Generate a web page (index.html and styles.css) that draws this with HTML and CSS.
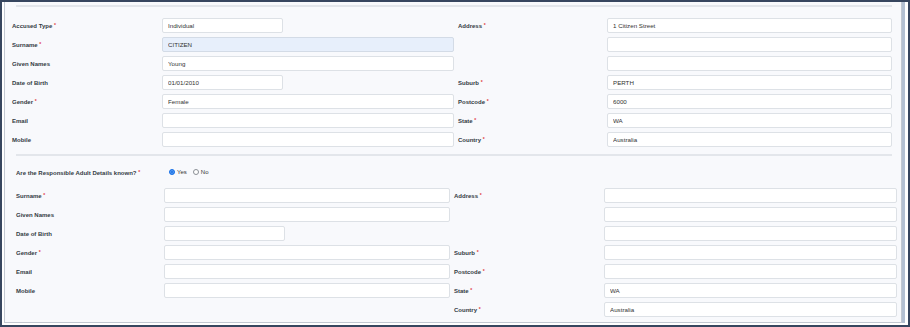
FILE: index.html
```html
<!DOCTYPE html>
<html lang="en">
<head>
    <meta charset="UTF-8">
    <meta name="viewport" content="width=device-width, initial-scale=1.0">
    <title>Accused Details</title>
    <link rel="stylesheet" href="styles.css">
</head>
<body>

    <div class="frame">
        <div class="panel">

            <div class="divider"></div>

            <!-- Accused details -->
            <div class="form-grid accused">
                <label class="field-label">Accused Type <span class="req">*</span></label>
                <input class="input short" type="text" value="Individual" readonly>
                <label class="field-label right">Address <span class="req">*</span></label>
                <input class="input" type="text" value="1 Citizen Street" readonly>

                <label class="field-label">Surname <span class="req">*</span></label>
                <input class="input filled" type="text" value="CITIZEN" readonly>
                <span></span>
                <input class="input" type="text" value="" readonly>

                <label class="field-label">Given Names</label>
                <input class="input" type="text" value="Young" readonly>
                <span></span>
                <input class="input" type="text" value="" readonly>

                <label class="field-label">Date of Birth</label>
                <input class="input short" type="text" value="01/01/2010" readonly>
                <label class="field-label right">Suburb <span class="req">*</span></label>
                <input class="input" type="text" value="PERTH" readonly>

                <label class="field-label">Gender <span class="req">*</span></label>
                <input class="input" type="text" value="Female" readonly>
                <label class="field-label right">Postcode <span class="req">*</span></label>
                <input class="input" type="text" value="6000" readonly>

                <label class="field-label">Email</label>
                <input class="input" type="text" value="" readonly>
                <label class="field-label right">State <span class="req">*</span></label>
                <input class="input" type="text" value="WA" readonly>

                <label class="field-label">Mobile</label>
                <input class="input" type="text" value="" readonly>
                <label class="field-label right">Country <span class="req">*</span></label>
                <input class="input" type="text" value="Australia" readonly>
            </div>

            <div class="divider second"></div>

            <!-- Responsible adult -->
            <div class="question">
                <label class="field-label">Are the Responsible Adult Details known? <span class="req">*</span></label>
                <div class="radio-group">
                    <span class="radio checked"></span><span class="radio-text">Yes</span>
                    <span class="radio"></span><span class="radio-text">No</span>
                </div>
            </div>

            <div class="form-grid adult">
                <label class="field-label">Surname <span class="req">*</span></label>
                <input class="input" type="text" value="" readonly>
                <label class="field-label right">Address <span class="req">*</span></label>
                <input class="input" type="text" value="" readonly>

                <label class="field-label">Given Names</label>
                <input class="input" type="text" value="" readonly>
                <span></span>
                <input class="input" type="text" value="" readonly>

                <label class="field-label">Date of Birth</label>
                <input class="input short" type="text" value="" readonly>
                <span></span>
                <input class="input" type="text" value="" readonly>

                <label class="field-label">Gender <span class="req">*</span></label>
                <input class="input" type="text" value="" readonly>
                <label class="field-label right">Suburb <span class="req">*</span></label>
                <input class="input" type="text" value="" readonly>

                <label class="field-label">Email</label>
                <input class="input" type="text" value="" readonly>
                <label class="field-label right">Postcode <span class="req">*</span></label>
                <input class="input" type="text" value="" readonly>

                <label class="field-label">Mobile</label>
                <input class="input" type="text" value="" readonly>
                <label class="field-label right">State <span class="req">*</span></label>
                <input class="input" type="text" value="WA" readonly>

                <span></span>
                <span></span>
                <label class="field-label right">Country <span class="req">*</span></label>
                <input class="input" type="text" value="Australia" readonly>
            </div>

        </div>
    </div>

</body>
</html>
```

FILE: styles.css
```css
body {
    margin: 0;
    padding: 0;
    background-color: #ffffff;
    font-family: "Liberation Sans", Arial, sans-serif;
}
.frame {
    box-sizing: border-box;
    width: 910px;
    height: 327px;
    border: 2px solid #37465f;
    padding: 0 6px 2px 2px;
    background-color: #ffffff;
    display: flex;
}
.panel {
    flex: 1;
    background-color: #f8f9fc;
    border: 1px solid #c2c8d1;
    border-top: none;
    box-shadow: 3px 0 0 #b3c0d2;
}
.divider {
    height: 2px;
    background-color: #e3e6eb;
    margin: 3px 9px 0 11px;
}
.divider.second {
    margin-top: 7px;
}
.form-grid {
    display: grid;
    grid-auto-rows: 15px;
    row-gap: 4px;
    align-items: center;
}
.accused {
    margin-top: 11px;
    padding-left: 7px;
    grid-template-columns: 150px 292px 153px 285px;
}
.adult {
    margin-top: 11px;
    padding-left: 11px;
    grid-template-columns: 148px 286px 154px 293px;
}
.field-label {
    font-size: 6px;
    font-weight: bold;
    color: #333b44;
    white-space: nowrap;
}
.field-label.right {
    padding-left: 4px;
}
.req {
    color: #e0383e;
    font-size: 5px;
    vertical-align: 1px;
}
.input {
    box-sizing: border-box;
    height: 15px;
    width: 100%;
    margin: 0;
    padding: 0 5px;
    border: 1px solid #dde1e6;
    border-radius: 2px;
    background-color: #ffffff;
    font-family: "Liberation Sans", Arial, sans-serif;
    font-size: 6.2px;
    color: #333333;
    outline: none;
}
.input.short {
    width: 121px;
    justify-self: start;
}
.input.filled {
    background-color: #e7effb;
    border-color: #d3dbe6;
}
.question {
    display: grid;
    grid-template-columns: 153px auto;
    align-items: center;
    height: 10px;
    margin-top: 11px;
    padding-left: 11px;
}
.radio-group {
    display: flex;
    align-items: center;
    margin-top: -1px;
}
.radio {
    box-sizing: border-box;
    width: 6px;
    height: 6px;
    border-radius: 50%;
    border: 1px solid #8a8f96;
    background-color: #ffffff;
    margin-right: 2px;
}
.radio.checked {
    border-color: #1a73e8;
    background-color: #1a73e8;
    box-shadow: inset 0 0 0 1px #5d9cf0;
}
.radio-text {
    font-size: 6px;
    color: #333333;
    margin-right: 6px;
}
```
